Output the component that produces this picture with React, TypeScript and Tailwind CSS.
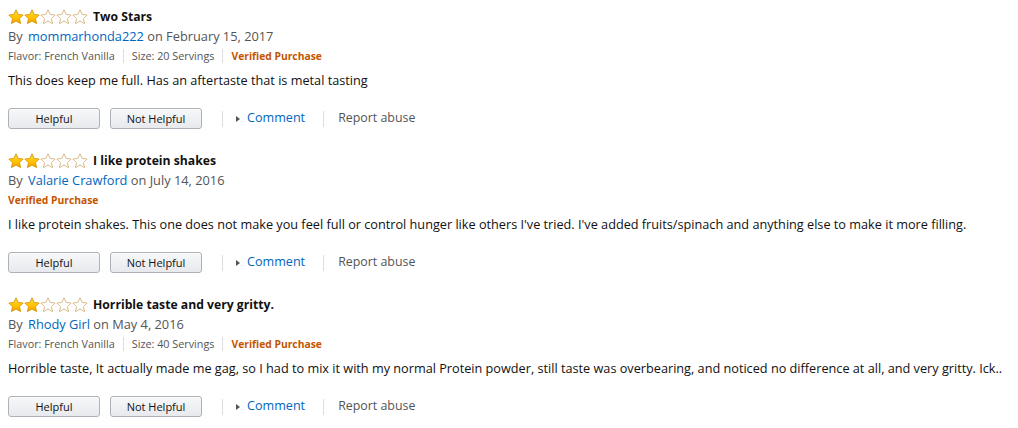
import React from "react";

type Review = {
  title: string;
  author: string;
  date: string;
  meta?: string[];
  body: string;
};

const reviews: Review[] = [
  {
    title: "Two Stars",
    author: "mommarhonda222",
    date: "February 15, 2017",
    meta: ["Flavor: French Vanilla", "Size: 20 Servings"],
    body: "This does keep me full. Has an aftertaste that is metal tasting",
  },
  {
    title: "I like protein shakes",
    author: "Valarie Crawford",
    date: "July 14, 2016",
    body: "I like protein shakes. This one does not make you feel full or control hunger like others I've tried. I've added fruits/spinach and anything else to make it more filling.",
  },
  {
    title: "Horrible taste and very gritty.",
    author: "Rhody Girl",
    date: "May 4, 2016",
    meta: ["Flavor: French Vanilla", "Size: 40 Servings"],
    body: "Horrible taste, It actually made me gag, so I had to mix it with my normal Protein powder, still taste was overbearing, and noticed no difference at all, and very gritty. Ick..",
  },
];

const STAR =
  "M8 0.9 L10.2 5.5 L15.2 6.1 L11.5 9.5 L12.5 14.5 L8 12 L3.5 14.5 L4.5 9.5 L0.8 6.1 L5.8 5.5 Z";

function Star({ filled, id }: { filled: boolean; id: string }) {
  return (
    <svg width="16" height="16" viewBox="0 0 16 16" className="block">
      <defs>
        <linearGradient id={id} x1="0" y1="0" x2="0" y2="1">
          <stop offset="0" stopColor="#ffdc4a" />
          <stop offset="0.55" stopColor="#ffc400" />
          <stop offset="1" stopColor="#f2a200" />
        </linearGradient>
      </defs>
      <path
        d={STAR}
        fill={filled ? `url(#${id})` : "#ffffff"}
        stroke={filled ? "#d99400" : "#d3b37a"}
        strokeWidth="0.9"
        strokeLinejoin="round"
      />
    </svg>
  );
}

function Stars({ n, k }: { n: number; k: number }) {
  return (
    <div className="flex">
      {[0, 1, 2, 3, 4].map((i) => (
        <Star key={i} filled={i < n} id={`g${k}-${i}`} />
      ))}
    </div>
  );
}

function Btn({ label, className = "" }: { label: string; className?: string }) {
  return (
    <button
      className={`w-[92px] h-[21px] shrink-0 rounded-[3px] border border-[#adb1b8] bg-gradient-to-b from-[#f7f8fa] to-[#e7e9ec] text-[11px] text-[#111] leading-[19px] shadow-[inset_0_1px_0_rgba(255,255,255,0.6)] ${className}`}
    >
      {label}
    </button>
  );
}

function ReviewItem({ r, k }: { r: Review; k: number }) {
  return (
    <div className="pb-[23px]">
      <div className="flex items-center h-[18px]">
        <Stars n={2} k={k} />
        <span className="ml-[5px] text-[12.2px] font-bold text-[#111] leading-[18px]">{r.title}</span>
      </div>
      <div className="h-[20px] text-[12.8px] leading-[20px] text-[#555]">
        By <span className="ml-[2px] text-[#0066c0]">{r.author}</span> on {r.date}
      </div>
      <div className="h-[20px] flex items-center text-[10.8px] leading-[20px] text-[#555]">
        {r.meta &&
          r.meta.map((m, i) => (
            <React.Fragment key={i}>
              <span>{m}</span>
              <span className="mx-[8px] w-px h-[14px] bg-[#ddd]" />
            </React.Fragment>
          ))}
        <span className="text-[10.3px] font-bold text-[#c45500]">Verified Purchase</span>
      </div>
      <div className="mt-[4px] text-[12.7px] leading-[20px] text-[#111] whitespace-nowrap">{r.body}</div>
      <div className="mt-[18px] flex items-center h-[21px]">
        <Btn label="Helpful" />
        <Btn label="Not Helpful" className="ml-[10px]" />
        <span className="ml-[20px] w-px h-[16px] bg-[#ddd]" />
        <span className="ml-[13px] w-0 h-0 border-y-[3.5px] border-y-transparent border-l-[4px] border-l-[#555]" />
        <span className="ml-[7px] text-[12.6px] text-[#0066c0]">Comment</span>
        <span className="ml-[18px] w-px h-[16px] bg-[#ddd]" />
        <span className="ml-[14px] text-[12.4px] text-[#555]">Report abuse</span>
      </div>
    </div>
  );
}

export default function App() {
  return (
    <div
      className="w-[1018px] h-[428px] bg-white pl-[8px] pt-[8px] overflow-hidden"
      style={{ fontFamily: '"Open Sans", "Noto Sans", sans-serif' }}
    >
      {reviews.map((r, i) => (
        <ReviewItem key={i} r={r} k={i} />
      ))}
    </div>
  );
}
